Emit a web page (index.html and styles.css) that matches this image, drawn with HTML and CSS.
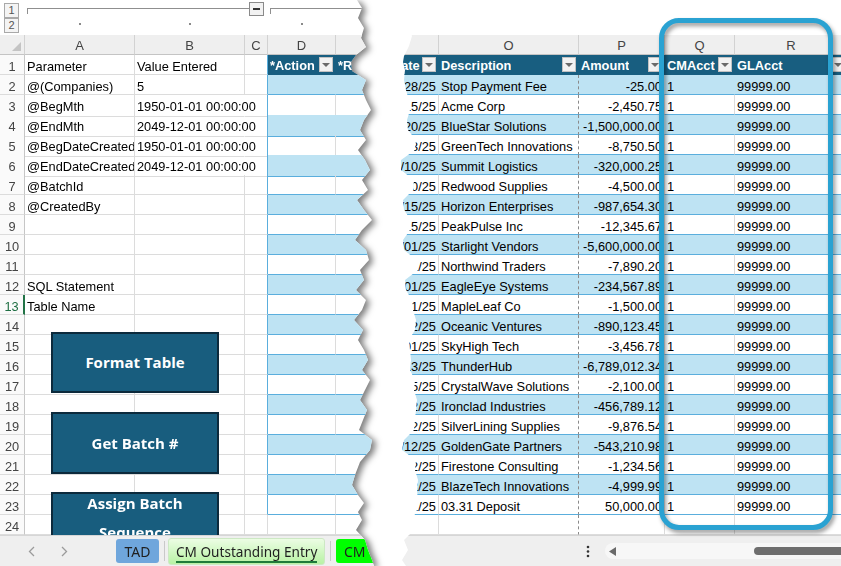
FILE: index.html
```html
<!DOCTYPE html>
<html>
<head>
<meta charset="utf-8">
<link rel="stylesheet" href="styles.css">
</head>
<body>
<div class="lwrap">
<div class="lp">
  <div class="ol">
    <div class="lvl"><span class="lb">1</span><span class="lb">2</span></div>
    <div class="grp">
      <div class="gl"><span class="seg s1"></span><span class="mn"></span><span class="seg s2"></span></div>
      <div class="dots"><span></span><span></span><span class="nd"></span><span></span></div>
    </div>
  </div>
  <div class="sheet">
    <div class="r ch"><span class="corner"><svg width="9" height="9" viewBox="0 0 9 9"><path d="M9 0V9H0Z" fill="#c4c4c4"/></svg></span><span>A</span><span>B</span><span>C</span><span>D</span><span></span></div>
    <div class="r"><span class="rh">1</span><span>Parameter</span><span>Value Entered</span><span class="tl"></span><span class="th"><em>*Action</em><b class="fb"></b></span><span class="th"><em>*Reference</em><b class="fb"></b></span></div>
    <div class="r"><span class="rh">2</span><span>@(Companies)</span><span>5</span><span class="tl"></span><span class="tb"></span><span class="tb"></span></div>
    <div class="r"><span class="rh">3</span><span>@BegMth</span><span class="ov dt">1950-01-01 00:00:00</span><span class="tl"></span><span class="tw"></span><span class="tw"></span></div>
    <div class="r"><span class="rh">4</span><span>@EndMth</span><span class="ov dt">2049-12-01 00:00:00</span><span class="tl"></span><span class="tb"></span><span class="tb"></span></div>
    <div class="r"><span class="rh">5</span><span>@BegDateCreated</span><span class="ov dt">1950-01-01 00:00:00</span><span class="tl"></span><span class="tw"></span><span class="tw"></span></div>
    <div class="r"><span class="rh">6</span><span>@EndDateCreated</span><span class="ov dt">2049-12-01 00:00:00</span><span class="tl"></span><span class="tb"></span><span class="tb"></span></div>
    <div class="r"><span class="rh">7</span><span>@BatchId</span><span></span><span class="tl"></span><span class="tw"></span><span class="tw"></span></div>
    <div class="r"><span class="rh">8</span><span>@CreatedBy</span><span></span><span class="tl"></span><span class="tb"></span><span class="tb"></span></div>
    <div class="r"><span class="rh">9</span><span></span><span></span><span class="tl"></span><span class="tw"></span><span class="tw"></span></div>
    <div class="r"><span class="rh">10</span><span></span><span></span><span class="tl"></span><span class="tb"></span><span class="tb"></span></div>
    <div class="r"><span class="rh">11</span><span></span><span></span><span class="tl"></span><span class="tw"></span><span class="tw"></span></div>
    <div class="r"><span class="rh">12</span><span>SQL Statement</span><span></span><span class="tl"></span><span class="tb"></span><span class="tb"></span></div>
    <div class="r"><span class="rh act">13</span><span>Table Name</span><span></span><span class="tl"></span><span class="tw"></span><span class="tw"></span></div>
    <div class="r"><span class="rh">14</span><span></span><span></span><span class="tl"></span><span class="tb"></span><span class="tb"></span></div>
    <div class="r"><span class="rh">15</span><span></span><span></span><span class="tl"></span><span class="tw"></span><span class="tw"></span></div>
    <div class="r"><span class="rh">16</span><span></span><span></span><span class="tl"></span><span class="tb"></span><span class="tb"></span></div>
    <div class="r"><span class="rh">17</span><span></span><span></span><span class="tl"></span><span class="tw"></span><span class="tw"></span></div>
    <div class="r"><span class="rh">18</span><span></span><span></span><span class="tl"></span><span class="tb"></span><span class="tb"></span></div>
    <div class="r"><span class="rh">19</span><span></span><span></span><span class="tl"></span><span class="tw"></span><span class="tw"></span></div>
    <div class="r"><span class="rh">20</span><span></span><span></span><span class="tl"></span><span class="tb"></span><span class="tb"></span></div>
    <div class="r"><span class="rh">21</span><span></span><span></span><span class="tl"></span><span class="tw"></span><span class="tw"></span></div>
    <div class="r"><span class="rh">22</span><span></span><span></span><span class="tl"></span><span class="tb"></span><span class="tb"></span></div>
    <div class="r"><span class="rh">23</span><span></span><span></span><span class="tl"></span><span class="tw"></span><span class="tw"></span></div>
    <div class="r"><span class="rh">24</span><span></span><span></span><span></span><span></span><span></span></div>
    <div class="btn b1">Format Table</div>
    <div class="btn b2">Get Batch #</div>
    <div class="btn b3">Assign Batch<br>Sequence</div>
  </div>
  <div class="tabs lt">
    <svg class="arr a1" width="7" height="11" viewBox="0 0 7 11"><path d="M6 1 1.5 5.5 6 10" fill="none" stroke="#9b9b9b" stroke-width="1.3"/></svg>
    <svg class="arr a2" width="7" height="11" viewBox="0 0 7 11"><path d="M1 1l4.5 4.5L1 10" fill="none" stroke="#9b9b9b" stroke-width="1.3"/></svg>
    <span class="tab tad">TAD</span>
    <span class="sep"></span>
    <span class="tab cmo"><span class="ul">CM Outstanding Entry</span></span>
    <span class="sep"></span>
    <span class="tab grn">CM Payments</span>
  </div>
</div>
</div>

<div class="rp">
  <div class="ol"></div>
  <div class="sheet">
    <div class="r ch"><span></span><span>O</span><span>P</span><span>Q</span><span>R</span></div>
    <div class="r"><span class="th"><em>Date</em><b class="fb"></b></span><span class="th"><em>Description</em><b class="fb"></b></span><span class="th"><em>Amount</em><b class="fb"></b></span><span class="th"><em>CMAcct</em><b class="fb"></b></span><span class="th"><em>GLAcct</em><b class="fb"></b></span></div>
    <div class="r"><span class="n tb">03/28/25</span><span class="o tb">Stop Payment Fee</span><span class="a tb">-25.00</span><span class="tb">1</span><span class="tb">99999.00</span></div>
    <div class="r"><span class="n tw">03/15/25</span><span class="o tw">Acme Corp</span><span class="a tw">-2,450.75</span><span class="tw">1</span><span class="tw">99999.00</span></div>
    <div class="r"><span class="n tb">03/20/25</span><span class="o tb">BlueStar Solutions</span><span class="a tb">-1,500,000.00</span><span class="tb">1</span><span class="tb">99999.00</span></div>
    <div class="r"><span class="n tw">03/03/25</span><span class="o tw">GreenTech Innovations</span><span class="a tw">-8,750.50</span><span class="tw">1</span><span class="tw">99999.00</span></div>
    <div class="r"><span class="n tb">03/10/25</span><span class="o tb">Summit Logistics</span><span class="a tb">-320,000.25</span><span class="tb">1</span><span class="tb">99999.00</span></div>
    <div class="r"><span class="n tw">03/10/25</span><span class="o tw">Redwood Supplies</span><span class="a tw">-4,500.00</span><span class="tw">1</span><span class="tw">99999.00</span></div>
    <div class="r"><span class="n tb">03/15/25</span><span class="o tb">Horizon Enterprises</span><span class="a tb">-987,654.30</span><span class="tb">1</span><span class="tb">99999.00</span></div>
    <div class="r"><span class="n tw">03/15/25</span><span class="o tw">PeakPulse Inc</span><span class="a tw">-12,345.67</span><span class="tw">1</span><span class="tw">99999.00</span></div>
    <div class="r"><span class="n tb">03/01/25</span><span class="o tb">Starlight Vendors</span><span class="a tb">-5,600,000.00</span><span class="tb">1</span><span class="tb">99999.00</span></div>
    <div class="r"><span class="n tw">03/01/25</span><span class="o tw">Northwind Traders</span><span class="a tw">-7,890.20</span><span class="tw">1</span><span class="tw">99999.00</span></div>
    <div class="r"><span class="n tb">03/01/25</span><span class="o tb">EagleEye Systems</span><span class="a tb">-234,567.89</span><span class="tb">1</span><span class="tb">99999.00</span></div>
    <div class="r"><span class="n tw">03/01/25</span><span class="o tw">MapleLeaf Co</span><span class="a tw">-1,500.00</span><span class="tw">1</span><span class="tw">99999.00</span></div>
    <div class="r"><span class="n tb">03/12/25</span><span class="o tb">Oceanic Ventures</span><span class="a tb">-890,123.45</span><span class="tb">1</span><span class="tb">99999.00</span></div>
    <div class="r"><span class="n tw">03/01/25</span><span class="o tw">SkyHigh Tech</span><span class="a tw">-3,456.78</span><span class="tw">1</span><span class="tw">99999.00</span></div>
    <div class="r"><span class="n tb">03/13/25</span><span class="o tb">ThunderHub</span><span class="a tb">-6,789,012.34</span><span class="tb">1</span><span class="tb">99999.00</span></div>
    <div class="r"><span class="n tw">03/05/25</span><span class="o tw">CrystalWave Solutions</span><span class="a tw">-2,100.00</span><span class="tw">1</span><span class="tw">99999.00</span></div>
    <div class="r"><span class="n tb">03/12/25</span><span class="o tb">Ironclad Industries</span><span class="a tb">-456,789.12</span><span class="tb">1</span><span class="tb">99999.00</span></div>
    <div class="r"><span class="n tw">03/12/25</span><span class="o tw">SilverLining Supplies</span><span class="a tw">-9,876.54</span><span class="tw">1</span><span class="tw">99999.00</span></div>
    <div class="r"><span class="n tb">03/12/25</span><span class="o tb">GoldenGate Partners</span><span class="a tb">-543,210.98</span><span class="tb">1</span><span class="tb">99999.00</span></div>
    <div class="r"><span class="n tw">03/12/25</span><span class="o tw">Firestone Consulting</span><span class="a tw">-1,234.56</span><span class="tw">1</span><span class="tw">99999.00</span></div>
    <div class="r"><span class="n tb">03/22/25</span><span class="o tb">BlazeTech Innovations</span><span class="a tb">-4,999.99</span><span class="tb">1</span><span class="tb">99999.00</span></div>
    <div class="r"><span class="n tw">03/31/25</span><span class="o tw">03.31 Deposit</span><span class="a tw">50,000.00</span><span class="tw">1</span><span class="tw">99999.00</span></div>
    <div class="r"><span></span><span class="o"></span><span></span><span></span><span></span></div>
  </div>
  <div class="tabs rt">
    <svg class="vd" width="4" height="13" viewBox="0 0 4 13"><circle cx="2" cy="2" r="1.3" fill="#333"/><circle cx="2" cy="6.5" r="1.3" fill="#333"/><circle cx="2" cy="11" r="1.3" fill="#333"/></svg>
    <div class="track">
      <svg class="la" width="7" height="9" viewBox="0 0 7 9"><path d="M7 0V9L0 4.5Z" fill="#6a6a6a"/></svg>
      <span class="thumb"></span>
    </div>
  </div>
  <div class="hl"></div>
</div>
</body>
</html>
```
FILE: styles.css
```css
* { box-sizing: border-box; margin: 0; padding: 0; }
html, body { width: 841px; height: 566px; overflow: hidden; background: #fff; }
body { display: flex; font-family: "Liberation Sans", Arial, sans-serif; font-size: 12.8px; color: #000; }

.lwrap { width: 380px; flex: none; position: relative; z-index: 1; filter: drop-shadow(4px 2px 3px rgba(0,0,0,.5)); }
.lp {
  width: 380px; height: 566px; background: #fff; display: flex; flex-direction: column; overflow: hidden;
  clip-path: polygon(0 0, 357px 0, 362px 8px, 358px 18px, 364px 28px, 361px 38px, 366px 47px, 356px 55px, 351px 62px, 352px 71px, 366px 80px, 362px 90px, 366px 100px, 371px 110px, 364px 120px, 360px 130px, 366px 140px, 358px 150px, 365px 160px, 370px 170px, 362px 180px, 368px 190px, 357px 200px, 364px 210px, 372px 220px, 362px 230px, 355px 240px, 366px 250px, 369px 260px, 360px 270px, 364px 280px, 356px 290px, 366px 300px, 362px 310px, 354px 320px, 363px 330px, 358px 340px, 364px 350px, 368px 360px, 362px 370px, 370px 380px, 365px 390px, 360px 400px, 367px 410px, 363px 420px, 359px 430px, 372px 440px, 370px 450px, 360px 462px, 355px 475px, 352px 485px, 358px 495px, 364px 503px, 358px 512px, 362px 520px, 356px 530px, 365px 540px, 368px 550px, 372px 560px, 374px 566px, 0 566px);
}
.rp {
  width: 451px; flex: none; margin-left: 10px; height: 566px; background: #fff; display: flex; flex-direction: column; overflow: hidden; position: relative;
  clip-path: polygon(18px 0, 24px 12px, 17px 24px, 22px 36px, 19px 46px, 14px 56px, 13px 62px, 15px 70px, 14px 80px, 16px 90px, 19px 100px, 20px 110px, 17px 120px, 18px 130px, 26px 140px, 25px 150px, 11px 160px, 11px 170px, 24px 180px, 23px 190px, 13px 200px, 14px 210px, 21px 220px, 20px 230px, 13px 240px, 14px 250px, 27px 260px, 28px 270px, 15px 280px, 16px 290px, 22px 300px, 23px 310px, 26px 320px, 25px 330px, 19px 340px, 20px 350px, 21px 360px, 20px 370px, 25px 380px, 24px 390px, 27px 400px, 26px 410px, 25px 420px, 24px 430px, 14px 440px, 12px 450px, 26px 460px, 25px 470px, 28px 480px, 27px 490px, 28px 500px, 27px 510px, 22px 520px, 24px 530px, 14px 540px, 18px 550px, 12px 560px, 16px 566px, 451px 566px, 451px 0);
}

/* outline bar */
.ol { height: 35px; flex: none; display: flex; }
.lvl { width: 25px; flex: none; padding: 3px 0 0 4px; display: flex; flex-direction: column; }
.lb { width: 15px; height: 15px; border: 1px solid #a9a9a9; background: #f4f4f4; font-size: 11px; line-height: 13px; text-align: center; color: #555; }
.grp { flex: 1; display: flex; flex-direction: column; }
.gl { height: 17px; display: flex; align-items: flex-start; padding-left: 2px; }
.seg { height: 6px; margin-top: 8px; border-top: 1px solid #8f8f8f; border-left: 1px solid #8f8f8f; }
.s1 { width: 222px; }
.s2 { flex: 1; margin-left: 6px; }
.mn { width: 15px; height: 14px; margin-top: 2px; border: 1px solid #8a8a8a; background: #f2f2f2; display: flex; align-items: center; justify-content: center; }
.mn::after { content: ""; width: 7px; height: 2px; background: #333; }
.dots { display: grid; grid-template-columns: 110px 110px 23px 68px; height: 18px; }
.dots span { display: flex; justify-content: center; padding-top: 6px; }
.dots span::after { content: ""; width: 2px; height: 2px; background: #8a8a8a; }
.dots span.nd::after { display: none; }

/* sheet */
.sheet { height: 500px; flex: none; position: relative; overflow: hidden; }
.r { display: grid; height: 20px; }
.lp .r { grid-template-columns: 25px 110px 110px 23px 68px 60px; }
.rp .r { grid-template-columns: 49px 140px 86px 70px 113px; }
.r > span { border-right: 1px solid #dcdcdc; border-bottom: 1px solid #dcdcdc; padding: 2px 2px 0; line-height: 19px; white-space: nowrap; overflow: hidden; }
.r > span.ov { overflow: visible; border-right-color: transparent; }
.r > span.rh { padding: 2px 0 0; text-align: center; color: #444; background: #fafafa; border-right-color: #c6c6c6; }
.r > span.act { color: #1e6e42; border-right: 2px solid #217346; }

.ch { background: #efefef; }
.ch > span { text-align: center; color: #444; font-size: 13px; padding-top: 1px !important; border-right-color: #d2d2d2 !important; border-bottom-color: #c4c4c4 !important; }
.ch > span.corner { display: flex; justify-content: flex-end; align-items: flex-end; padding: 0 3px 3px 0; border-right-color: #c6c6c6; }

.r > span.th { background: #185e80; color: #fff; font-weight: bold; display: flex; align-items: center; border-right-color: #185e80; border-bottom-color: #185e80; padding: 0 2px; }
.th em { font-style: normal; overflow: hidden; min-width: 0; flex: 0 1 auto; line-height: 19px; padding-top: 2px; }
.fb { width: 14px; height: 15px; flex: none; margin-left: auto; background: #f2f2f2; border: 1px solid #c2c2c2; display: flex; align-items: center; justify-content: center; }
.fb::after { content: ""; border-left: 4px solid transparent; border-right: 4px solid transparent; border-top: 4px solid #6a6a6a; }

.r > span.tb { background: #bee3f3; border-right-color: #bee3f3; border-bottom-color: #5aaedd; }
.r > span.tw { border-bottom-color: #5aaedd; }
.r > span.tl { border-right-color: #5aaedd; }

.rp .r > span.o { border-right: 1px dashed #8a8a8a; }
.r > span.n { display: flex; justify-content: flex-end; padding-right: 2px; }
.r > span.a { text-align: right; padding-right: 2px; }

/* buttons */
.btn { position: absolute; left: 51px; width: 168px; height: 61px; background: #185d7e; border: 2px solid #0c2a3c; color: #fff; font: 700 15px/29px "Open Sans", sans-serif; display: flex; align-items: center; justify-content: center; text-align: center; }
.b1 { top: 297px; }
.b2 { top: 377px; height: 62px; }
.b3 { top: 457px; padding-bottom: 10px; }

/* tab bar */
.tabs { height: 31px; flex: none; background: #efefef; border-top: 1px solid #d6d6d6; display: flex; align-items: center; font-family: "Noto Sans", sans-serif; font-size: 14px; color: #1f1f1f; }
.tabs > * { flex: none; }
.lt { padding-left: 28px; }
.a2 { margin-left: 26px; }
.tab { display: flex; align-items: center; white-space: nowrap; border-radius: 3px; }
.tad { margin-left: 48px; width: 43px; height: 24px; justify-content: center; background: #6fa6dc; }
.sep { width: 1px; height: 20px; background: #c9c9c9; margin: 0 3px 0 5px; }
.cmo { width: 157px; height: 27px; padding: 0 7px; font-size: 13.6px; background: linear-gradient(#ecfde4, #b8f2a4); border: 1px solid #cde8c4; }
.ul { border-bottom: 2px solid #1f7a3a; line-height: 19px; margin-top: 3px; }
.grn { height: 24px; padding: 0 8px; margin-left: 2px; background: #00ff00; }

.rt { padding-left: 196px; }
.tabs > .track { margin-left: 15px; flex: 1; height: 16px; background: #f7f7f7; border-radius: 8px 0 0 8px; display: flex; align-items: center; padding-left: 4px; }
.la { flex: none; }
.thumb { margin-left: 138px; flex: 1; height: 8px; background: #6e6e6e; border-radius: 4px 0 0 4px; }

.hl { position: absolute; left: 269px; top: 18px; width: 174px; height: 512px; border: 5px solid #2aa2d2; border-radius: 20px; filter: drop-shadow(2px 3px 2px rgba(0,0,0,.4)); }
```
